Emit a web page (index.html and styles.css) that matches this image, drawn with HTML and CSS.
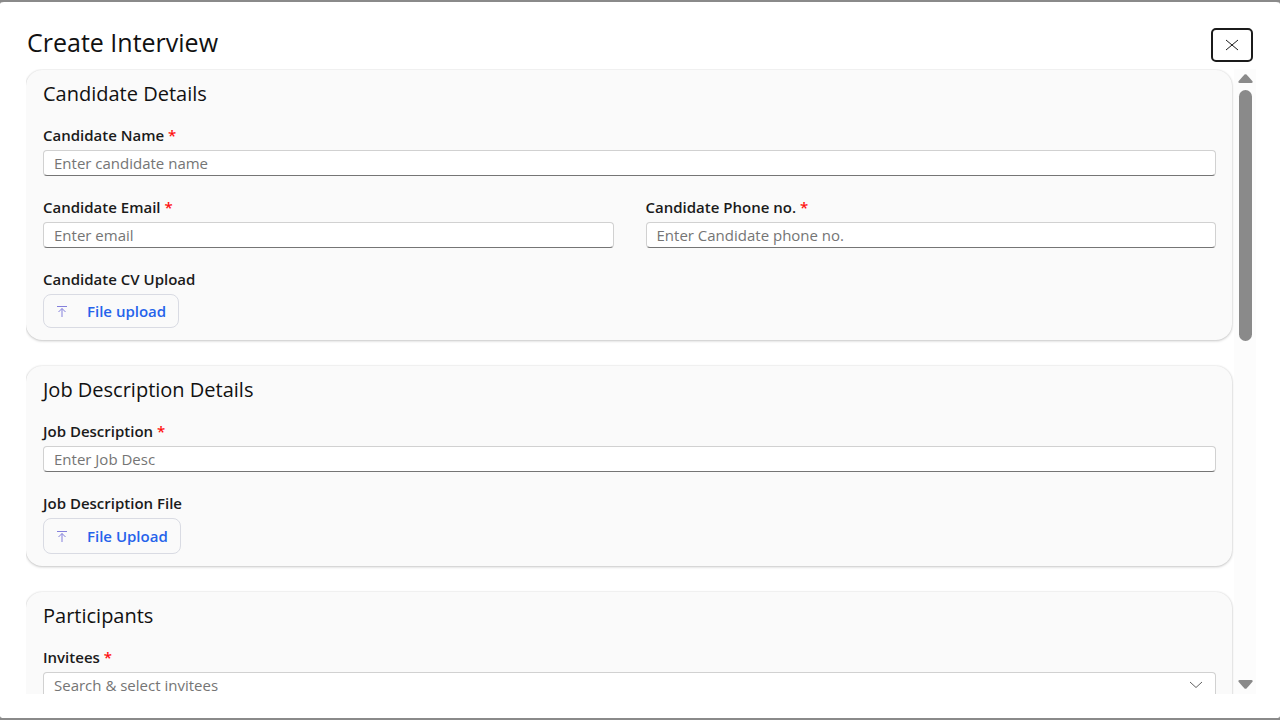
FILE: index.html
```html
<!DOCTYPE html>
<html lang="en">
<head>
    <meta charset="UTF-8">
    <meta name="viewport" content="width=device-width, initial-scale=1.0">
    <title>Create Interview</title>
    <link rel="stylesheet" href="styles.css">
</head>
<body>

<div class="dialog" role="dialog" aria-labelledby="dialogTitle">
    <header class="dialog-header">
        <h1 id="dialogTitle">Create Interview</h1>
        <button type="button" class="close-button" aria-label="Close">
            <svg width="14" height="12" viewBox="0 0 14 12"><path d="M1 1L13 11M13 1L1 11"/></svg>
        </button>
    </header>

    <div class="dialog-body">
        <form class="form-scroll" id="formScroll">

            <!-- Candidate Details -->
            <section class="card">
                <h2>Candidate Details</h2>
                <div class="fields">
                    <div class="field">
                        <label for="candidateName">Candidate Name <span class="required">*</span></label>
                        <input type="text" id="candidateName" placeholder="Enter candidate name">
                    </div>
                    <div class="field-row">
                        <div class="field">
                            <label for="candidateEmail">Candidate Email <span class="required">*</span></label>
                            <input type="email" id="candidateEmail" placeholder="Enter email">
                        </div>
                        <div class="field">
                            <label for="candidatePhone">Candidate Phone no. <span class="required">*</span></label>
                            <input type="tel" id="candidatePhone" placeholder="Enter Candidate phone no.">
                        </div>
                    </div>
                    <div class="field">
                        <label for="cvUpload">Candidate CV Upload</label>
                        <button type="button" class="upload-button" id="cvUpload">
                            <svg width="10" height="11" viewBox="0 0 10 11"><path d="M0 .5H10M5 11V2.5M1.5 6L5 2.5L8.5 6"/></svg>
                            File upload
                        </button>
                    </div>
                </div>
            </section>

            <!-- Job Description -->
            <section class="card">
                <h2>Job Description Details</h2>
                <div class="fields">
                    <div class="field">
                        <label for="jobDescription">Job Description <span class="required">*</span></label>
                        <input type="text" id="jobDescription" placeholder="Enter Job Desc">
                    </div>
                    <div class="field">
                        <label for="jobUpload">Job Description File</label>
                        <button type="button" class="upload-button upload-button-tall" id="jobUpload">
                            <svg width="10" height="11" viewBox="0 0 10 11"><path d="M0 .5H10M5 11V2.5M1.5 6L5 2.5L8.5 6"/></svg>
                            File Upload
                        </button>
                    </div>
                </div>
            </section>

            <!-- Participants -->
            <section class="card">
                <h2>Participants</h2>
                <div class="fields">
                    <div class="field">
                        <label for="invitees">Invitees <span class="required">*</span></label>
                        <div class="select-wrap">
                            <select id="invitees">
                                <option value="">Search &amp; select invitees</option>
                            </select>
                            <svg width="14" height="8" viewBox="0 0 14 8"><path d="M1 1L7 6.5L13 1"/></svg>
                        </div>
                    </div>
                </div>
            </section>
        </form>

        <div class="scrollbar" aria-hidden="true">
            <svg width="15" height="9" viewBox="0 0 15 9"><path d="M6.5 .6Q7.5 -.2 8.5 .6L14.5 7.2Q15 9 13.5 9H1.5Q0 9 .5 7.2Z"/></svg>
            <div class="track"><div class="thumb"></div></div>
            <svg width="15" height="9" viewBox="0 0 15 9"><path d="M6.5 8.4Q7.5 9.2 8.5 8.4L14.5 1.8Q15 0 13.5 0H1.5Q0 0 .5 1.8Z"/></svg>
        </div>
    </div>
</div>

</body>
</html>
```
FILE: styles.css
```css
* {
    box-sizing: border-box;
}
body {
    margin: 0;
    background: #8a8a8a;
    color: #1b1b1b;
    font-family: "Open Sans", "Noto Sans", sans-serif;
    font-size: 15px;
    line-height: 20px;
}
h1, h2 {
    margin: 0;
    color: #111;
    font-weight: 500;
}
svg {
    fill: none;
    flex: none;
}
.dialog {
    display: flex;
    flex-direction: column;
    height: 100vh;
    padding: 26px 24px 24px 26px;
    background: white;
    border: solid #8a8a8a;
    border-width: 2px 0;
    border-radius: 4px;
}
.dialog-header {
    display: flex;
    justify-content: space-between;
    align-items: flex-start;
    padding: 0 3px 0 1px;
    margin-bottom: 7px;
}
h1 {
    font-size: 25px;
    line-height: 28px;
}
.close-button {
    display: flex;
    justify-content: center;
    align-items: center;
    width: 42px;
    height: 34px;
    padding: 0;
    background: white;
    border: 2px solid #1b1b1b;
    border-radius: 5px;
}
.close-button svg {
    stroke: #1b1b1b;
}
.dialog-body {
    display: flex;
    flex: 1;
    min-height: 0;
}
.form-scroll {
    display: flex;
    flex-direction: column;
    flex: 1;
    gap: 26px;
    padding: 1px 2px 24px 0;
    overflow-y: auto;
    scrollbar-width: none;
}
.card {
    flex: none;
    padding: 12px 16px 12px 17px;
    background: #fafafa;
    border-radius: 16px;
    box-shadow: 0 0 2px rgba(0, 0, 0, 0.12), 0 1px 3px rgba(0, 0, 0, 0.2);
}
h2 {
    margin-bottom: 20px;
    font-size: 20px;
    line-height: 24px;
}
.fields {
    display: flex;
    flex-direction: column;
    gap: 22px;
}
.field-row {
    display: flex;
    gap: 32px;
}
.field {
    display: flex;
    flex-direction: column;
    flex: 1;
    align-items: flex-start;
    gap: 6px;
}
label {
    font-weight: 600;
    line-height: 18px;
}
.required {
    color: #ff1010;
}
input, select {
    width: 100%;
    height: 26px;
    padding: 0 10px;
    background: white;
    border: 1px solid #d1d1d1;
    border-bottom-color: #757575;
    border-radius: 4px;
    color: #1b1b1b;
    font: inherit;
}
input::placeholder {
    color: #757575;
}
.select-wrap {
    display: grid;
    align-items: center;
    width: 100%;
}
.select-wrap select, .select-wrap svg {
    grid-area: 1 / 1;
}
.select-wrap select {
    appearance: none;
    color: #757575;
}
.select-wrap svg {
    justify-self: end;
    margin-right: 13px;
    stroke: #616161;
    pointer-events: none;
}
.upload-button {
    display: flex;
    align-items: center;
    gap: 20px;
    height: 34px;
    padding: 0 12px 0 13px;
    background: #fafafa;
    border: 1px solid #d9dbe3;
    border-radius: 8px;
    color: #2563eb;
    font: inherit;
    font-weight: 600;
}
.upload-button-tall {
    height: 36px;
}
.upload-button svg {
    stroke: #8480dc;
}
.scrollbar {
    display: flex;
    flex-direction: column;
    align-items: center;
    gap: 7px;
    width: 22px;
    padding: 5px 0;
    background: #fcfcfc;
}
.scrollbar svg {
    fill: #8a8a8a;
}
.track {
    flex: 1;
}
.thumb {
    width: 13px;
    height: 43%;
    background: #8a8a8a;
    border-radius: 7px;
}
```
